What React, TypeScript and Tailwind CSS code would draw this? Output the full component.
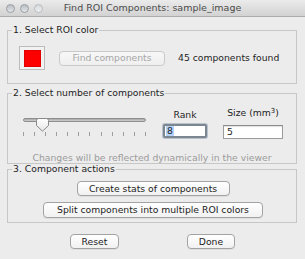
import React from "react";

function Btn({
  children,
  className = "",
  disabled = false,
}: {
  children: React.ReactNode;
  className?: string;
  disabled?: boolean;
}) {
  return (
    <div
      className={
        "flex items-center justify-center rounded-[4px] border leading-none " +
        (disabled
          ? "border-[#c9c9c9] bg-gradient-to-b from-[#f7f7f7] to-[#efefef] text-[#a6a6a6] "
          : "border-[#a3a3a3] bg-gradient-to-b from-[#ffffff] to-[#f1f1f1] text-[#1c1c1c] shadow-[0_1px_0_rgba(0,0,0,0.06)] ") +
        className
      }
    >
      {children}
    </div>
  );
}

function Light() {
  return (
    <div className="w-[9px] h-[9px] rounded-full border border-[#9a9ea3] bg-gradient-to-b from-[#b9bec4] to-[#e4e7ea]" />
  );
}

export default function App() {
  const ticks = Array.from({ length: 12 });
  return (
    <div className="w-[305px] h-[259px] overflow-hidden bg-[#ececec] flex flex-col font-['DejaVu_Sans',sans-serif] text-[9.25px] text-[#1e1e1e]">
      {/* title bar */}
      <div className="h-[17px] grid grid-cols-[1fr_auto_1fr] items-center bg-gradient-to-b from-[#ebebeb] to-[#d2d2d2] border-b border-[#acacac]">
        <div className="flex items-center gap-[5px] pl-[6px]">
          <Light />
          <Light />
          <div className="w-[9px] h-[9px] rounded-full border border-[#b8bbbe] bg-gradient-to-b from-[#d6d9dc] to-[#eef0f2]" />
        </div>
        <div className="text-[9.5px] leading-none text-[#4b4b4b]">Find ROI Components: sample_image</div>
        <div />
      </div>

      {/* group 1 */}
      <fieldset className="mt-[6px] ml-[7px] w-[290px] h-[61px] border border-[#c7c7c7]">
        <legend className="ml-[4px] px-[1px] leading-[14px]">1. Select ROI color</legend>
        <div className="mt-[9px] pl-[11px] flex items-center">
          <div className="w-[26px] h-[24px] border border-[#bcbcbc] bg-[#f2f2f2] flex items-center justify-center">
            <div className="w-[17px] h-[17px] bg-[#ff0000] border border-[#e00000]" />
          </div>
          <Btn disabled className="ml-[14px] w-[106px] h-[15px]">
            Find components
          </Btn>
          <div className="ml-[13px]">45 components found</div>
        </div>
      </fieldset>

      {/* group 2 */}
      <fieldset className="mt-[2px] ml-[7px] w-[290px] h-[78px] border border-[#c7c7c7]">
        <legend className="ml-[4px] px-[1px] leading-[14px]">2. Select number of components</legend>
        <div className="flex">
          <div className="ml-[15px] mt-[16px] w-[123px]">
            <div className="relative h-[13px]">
              <div className="mt-[2px] h-[4px] rounded-full border border-[#8e8e8e] bg-gradient-to-b from-[#a9a9a9] to-[#cfcfcf]" />
              <svg
                className="absolute left-[13px] top-0"
                width="13"
                height="14"
                viewBox="0 0 13 14"
              >
                <defs>
                  <linearGradient id="tg" x1="0" y1="0" x2="0" y2="1">
                    <stop offset="0" stopColor="#ffffff" />
                    <stop offset="1" stopColor="#e6e6e6" />
                  </linearGradient>
                </defs>
                <path
                  d="M2.5 0.5 H10.5 Q12.5 0.5 12.5 2.5 V7.5 L6.5 13.2 L0.5 7.5 V2.5 Q0.5 0.5 2.5 0.5 Z"
                  fill="url(#tg)"
                  stroke="#8a8a8a"
                  strokeWidth="1"
                />
              </svg>
            </div>
            <div className="mt-[1px] flex justify-between h-[4px]">
              {ticks.map((_, i) => (
                <div key={i} className="w-[1px] h-[4px] bg-[#9d9d9d]" />
              ))}
            </div>
          </div>
          <div className="ml-[17px] w-[44px] flex flex-col items-center">
            <div className="mt-[8px] leading-[14px]">Rank</div>
            <div className="mt-[2px] w-[44px] h-[14px] border-2 border-[#7d8792] rounded-[2px] bg-white flex items-center pl-[1px] shadow-[0_0_0_1px_#b7c2cd]">
              <span className="bg-[#b4d3fb] leading-[10px] px-[1px]">8</span>
            </div>
          </div>
          <div className="ml-[16px] w-[60px] flex flex-col items-center">
            <div className="mt-[6px] leading-[14px]">
              Size (mm<sup>3</sup>)
            </div>
            <div className="mt-[5px] w-[60px] h-[14px] border border-[#9c9c9c] border-t-[#8a8a8a] bg-white flex items-center pl-[3px] shadow-[inset_0_1px_1px_rgba(0,0,0,0.12)]">
              5
            </div>
          </div>
        </div>
        <div className="mt-[15px] leading-[8px] text-center text-[#9b9b9b]">
          Changes will be reflected dynamically in the viewer
        </div>
      </fieldset>

      {/* group 3 */}
      <fieldset className="mt-[1px] ml-[7px] w-[290px] h-[58px] border border-[#c7c7c7]">
        <legend className="ml-[4px] px-[1px] leading-[8px]">3. Component actions</legend>
        <div className="flex flex-col items-center">
          <Btn className="mt-[8px] ml-[2px] w-[153px] h-[15px]">Create stats of components</Btn>
          <Btn className="mt-[6px] ml-[2px] w-[220px] h-[16px]">Split components into multiple ROI colors</Btn>
        </div>
      </fieldset>

      <div className="mt-[11px] flex justify-center gap-[68px]">
        <Btn className="w-[49px] h-[15px]">Reset</Btn>
        <Btn className="w-[48px] h-[15px]">Done</Btn>
      </div>
    </div>
  );
}
